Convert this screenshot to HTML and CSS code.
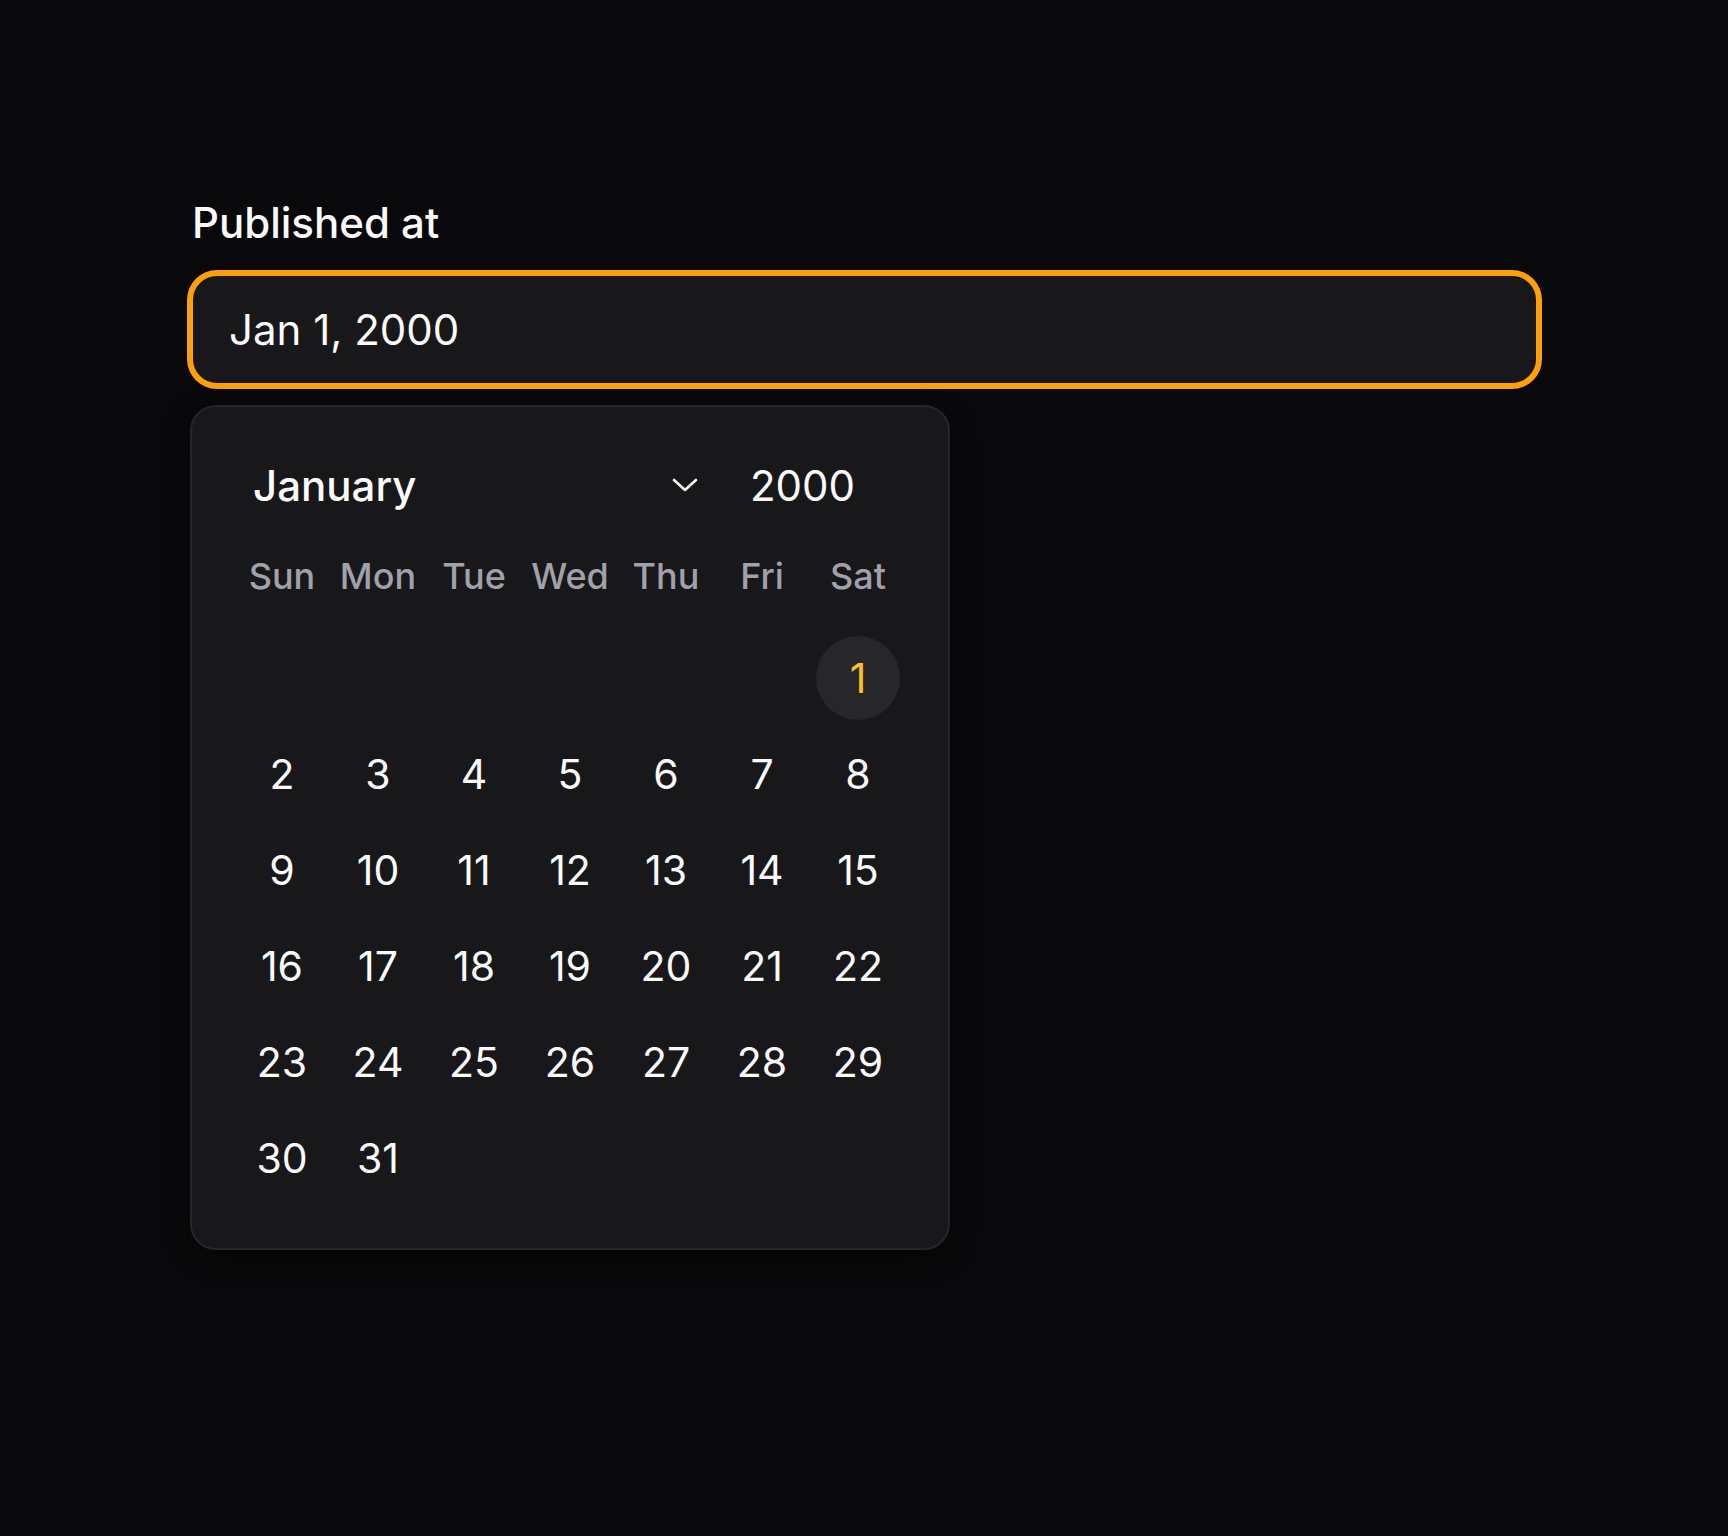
FILE: index.html
```html
<!DOCTYPE html>
<html lang="en">
<head>
<meta charset="utf-8">
<title>Published at</title>
<link rel="stylesheet" href="styles.css">
</head>
<body>
<div class="field">
  <label class="label">Published at</label>
  <div class="input">Jan 1, 2000</div>
  <div class="popover">
    <div class="cal-header">
      <div class="month">
        <span>January</span>
        <svg class="chev" width="26" height="14" viewBox="0 0 26 14"><path d="M2 2 L13 12 L24 2" fill="none" stroke="#fafafa" stroke-width="2.6" stroke-linecap="round" stroke-linejoin="round"/></svg>
      </div>
      <div class="year">2000</div>
    </div>
    <div class="weekdays">
      <span>Sun</span><span>Mon</span><span>Tue</span><span>Wed</span><span>Thu</span><span>Fri</span><span>Sat</span>
    </div>
    <div class="days">
      <span></span><span></span><span></span><span></span><span></span><span></span><span class="day selected">1</span>
      <span class="day">2</span><span class="day">3</span><span class="day">4</span><span class="day">5</span><span class="day">6</span><span class="day">7</span><span class="day">8</span>
      <span class="day">9</span><span class="day">10</span><span class="day">11</span><span class="day">12</span><span class="day">13</span><span class="day">14</span><span class="day">15</span>
      <span class="day">16</span><span class="day">17</span><span class="day">18</span><span class="day">19</span><span class="day">20</span><span class="day">21</span><span class="day">22</span>
      <span class="day">23</span><span class="day">24</span><span class="day">25</span><span class="day">26</span><span class="day">27</span><span class="day">28</span><span class="day">29</span>
      <span class="day">30</span><span class="day">31</span>
    </div>
  </div>
</div>
</body>
</html>
```
FILE: styles.css
```css
* { box-sizing: border-box; }
html, body { margin: 0; padding: 0; background: #09090b; }
body {
  font-family: Inter, "Noto Sans", sans-serif;
  color: #fafafa;
  min-height: 1536px;
}
.field {
  margin-left: 190px;
  padding-top: 198px;
  width: 1349px;
  display: flex;
  flex-direction: column;
  align-items: flex-start;
}
.label {
  font-size: 42px;
  font-weight: 500;
  line-height: 49px;
  color: #fafafa;
  padding-left: 2px;
}
.input {
  margin-top: 26px;
  width: 100%;
  height: 113px;
  border: 3px solid #ff9f0a;
  box-shadow: 0 0 0 3px #ff9f0a;
  border-radius: 27px;
  background: #18181b;
  display: flex;
  align-items: center;
  padding-left: 36px;
  font-size: 42px;
  color: #fafafa;
}
.popover {
  margin-top: 19px;
  width: 760px;
  border: 2px solid #26262a;
  border-radius: 26px;
  background: #18181b;
  padding: 42px;
  box-shadow: 0 8px 24px rgba(0,0,0,0.35);
}
.cal-header {
  height: 72px;
  display: flex;
  align-items: center;
  padding: 0 51px 0 19px;
  font-size: 42px;
  font-weight: 500;
}
.month {
  flex: 1;
  display: flex;
  align-items: center;
  justify-content: space-between;
}
.year {
  margin-left: 52px;
  font-weight: 400;
}
.chev { display: block; }
.weekdays {
  height: 109px;
  display: grid;
  grid-template-columns: repeat(7, 96px);
  align-items: center;
  font-size: 36px;
  font-weight: 500;
  color: #a1a1aa;
  text-align: center;
  padding-top: 1px;
}
.days {
  display: grid;
  grid-template-columns: repeat(7, 96px);
  grid-auto-rows: 96px;
}
.days span {
  display: flex;
  align-items: center;
  justify-content: center;
}
.day {
  font-size: 41px;
  color: #fafafa;
}
.day.selected {
  width: 84px;
  height: 84px;
  margin: 6px;
  border-radius: 50%;
  background: #27272a;
  color: #fbbf24;
}
```
